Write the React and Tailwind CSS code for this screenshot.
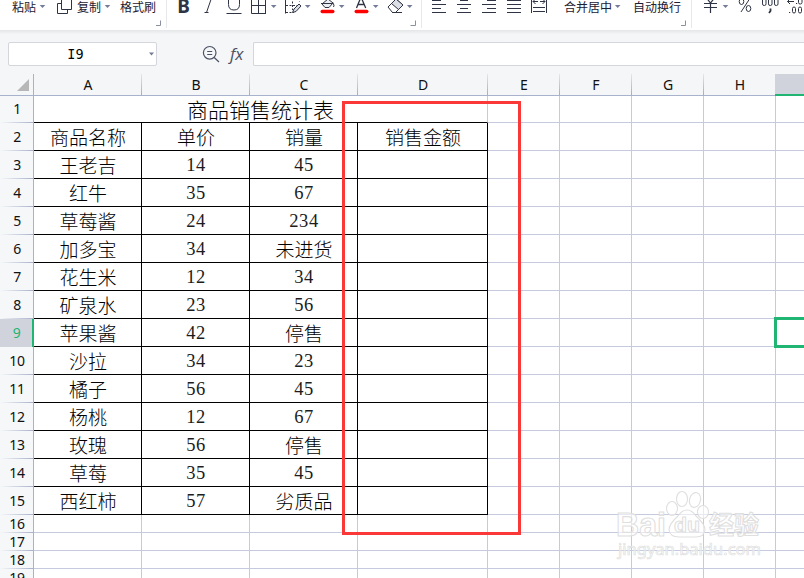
const CJK = `font-["Noto_Sans_CJK_SC",sans-serif]`;

const rows = [
  ["商品名称", "单价", "销量", "销售金额"],
  ["王老吉", "14", "45", ""],
  ["红牛", "35", "67", ""],
  ["草莓酱", "24", "234", ""],
  ["加多宝", "34", "未进货", ""],
  ["花生米", "12", "34", ""],
  ["矿泉水", "23", "56", ""],
  ["苹果酱", "42", "停售", ""],
  ["沙拉", "34", "23", ""],
  ["橘子", "56", "45", ""],
  ["杨桃", "12", "67", ""],
  ["玫瑰", "56", "停售", ""],
  ["草莓", "35", "45", ""],
  ["西红柿", "57", "劣质品", ""],
];

const dataWidths = ["w-[108px]", "w-[108px]", "w-[108px]", "w-[130px]"];
const columns = [
  ["A", "w-[108px]"],
  ["B", "w-[108px]"],
  ["C", "w-[108px]"],
  ["D", "w-[130px]"],
  ["E", "w-[72px]"],
  ["F", "w-[72px]"],
  ["G", "w-[72px]"],
  ["H", "w-[72px]"],
];

/* Drawing slot of the ribbon: x is its left edge in ribbon coordinates. */
function Draw({ x, w, children }) {
  return (
    <svg
      width={w}
      height="30"
      viewBox={`${x} 0 ${w} 30`}
      className="block shrink-0"
      fill="none"
      stroke="#2f3444"
      strokeWidth="1"
    >
      {children}
    </svg>
  );
}

function Caret({ x }) {
  return <path d={`M${x - 2.8} 5h5.6l-2.8 3z`} fill="#737b96" stroke="none" />;
}

function Corner({ x }) {
  return <path d={`M${x} 25.5h5v-5`} stroke="#8b90a0" />;
}

function Separator({ x }) {
  return <path d={`M${x + 0.5} 0v28`} stroke="#e6e8ec" />;
}

function Label({ width, children }) {
  return (
    <span className={`${width} ${CJK} h-[14px] shrink-0 whitespace-nowrap text-[12px] leading-[14px] text-[#1c2030]`}>
      {children}
    </span>
  );
}

function Ribbon() {
  return (
    <div className="flex h-[30px] w-full items-start overflow-hidden bg-white pl-[12px]">
      <Label width="w-[25px]">粘贴</Label>
      <Draw x={37} w={40}>
        <Caret x={42.5} />
        <path d="M61.5 -2H71.5V9.5H61.5z M61.5 3.5H57.5V13.5H67.5V9.5" />
      </Draw>
      <Label width="w-[25px]">复制</Label>
      <Draw x={102} w={18}>
        <Caret x={107.5} />
      </Draw>
      <Label width="w-[36px]">格式刷</Label>
      <Draw x={156} w={264}>
        <Corner x={155.5} />
        <Separator x={166} />
        <text x="177.3" y="12.5" fill="#2f3444" stroke="none" fontFamily="Noto Sans" fontWeight="700" fontSize="19">B</text>
        <path d="M206.500 12.500L211.500 -2M204.500 12.500h4" />
        <path d="M228.500 -2V4.500Q228.500 10 234 10T239.500 4.500V-2M226.500 13.500H241.500" />
        <path d="M251.500 -2V13.500H266M265.500 -2V13.500M258.500 -2V13.500M251.500 5.500H265.500" />
        <Caret x={273.7} />
        <path d="M285.500 -2V13.500" />
        <path d="M286 5.500H298M286 12.500H294M292.500 -2V10M299.500 -2V2" strokeDasharray="2 1.500" />
        <path d="M292.500 12.500L294 9L299 4L301 6L296 11.500z" fill="#d9dce2" />
        <Caret x={307.7} />
        <path d="M322 4L328 -1L333 3L329 7.500H325z M321 3.500H332" fill="#eceef2" />
        <path d="M332.500 2Q335 6 333.500 7" />
        <rect x="320.500" y="9.700" width="14" height="3.500" rx="1.700" fill="#ff0000" stroke="none" />
        <Caret x={341.700} />
        <path d="M356.500 8L361 -3L365.700 8M358 4.500H364" strokeWidth="1.300" />
        <rect x="354.500" y="9.700" width="14" height="3.500" rx="1.700" fill="#ff0000" stroke="none" />
        <Caret x={375.700} />
        <path d="M388 7L396 -1L403 5L395.500 12.500H392.500z" fill="#fff" />
        <path d="M391.500 3.500L396 -1L403 5L398.500 9.500z" fill="#dcdfe5" />
        <path d="M392 12.500H402" />
        <Caret x={409.700} />
        <Corner x={410.500} />
      </Draw>
      <Draw x={420} w={144}>
        <Separator x={421} />
        <path d="M432 .500H441M432 4.500H446M432 8.500H441M432 12.500H446" />
        <path d="M460 .500H468M457 4.500H471M460 8.500H468M457 12.500H471" />
        <path d="M487 .500H496M482 4.500H496M487 8.500H496M482 12.500H496" />
        <path d="M507 .500H521M507 4.500H521M507 8.500H521M507 12.500H521" />
        <path d="M531.500 0V13M546.500 0V13M533 7.500H545M533 11.500H545M533 1.500H538M540 1.500H545M535.500 -1L533 1.500L535.500 4M542.500 -1L545 1.500L542.500 4" />
      </Draw>
      <Label width="w-[49px]">合并居中</Label>
      <Draw x={613} w={20}>
        <Caret x={617.700} />
      </Draw>
      <Label width="w-[48px]">自动换行</Label>
      <Draw x={681} w={123}>
        <Corner x={680.500} />
        <Separator x={691} />
        <path d="M705 -4L710.500 3L716 -4M704 3.500H717M704 7.500H717M710.500 3V13" strokeWidth="1.200" />
        <Caret x={725.500} />
        <path d="M749.500 -1L741 12" />
        <ellipse cx="741.500" cy="1.500" rx="2.300" ry="3" />
        <ellipse cx="748.500" cy="8.500" rx="2.300" ry="3" />
        <rect x="762.500" y="-2" width="3.500" height="7.500" rx="1.600" />
        <rect x="768.500" y="-2" width="3.500" height="7.500" rx="1.600" />
        <rect x="774.500" y="-2" width="3.500" height="7.500" rx="1.600" />
        <path d="M770.500 8.500V11L769 13" strokeWidth="1.800" />
        <path d="M787.500 1.500H794M790 -1L787.500 1.500L790 4M796 3.500H797.200M789 12.500H790.200" />
        <rect x="798.500" y="-3" width="3.500" height="7" rx="1.600" />
        <rect x="792.500" y="7" width="3" height="6" rx="1.500" />
        <rect x="798.500" y="7" width="3" height="6" rx="1.500" />
      </Draw>
    </div>
  );
}

function FormulaBar() {
  return (
    <div className="flex h-[44px] items-start bg-gradient-to-b from-[#e5e6e8] from-0% to-[#f5f6f8] to-10% pt-[12px] pl-[8px]">
      <div className="flex h-[24px] w-[149px] items-center rounded-[2px] border border-[#d4d6db] bg-white">
        <span className="w-[135px] pt-px pr-[2px] text-center font-['DejaVu_Sans_Mono',monospace] text-[13.5px] leading-none text-black">I9</span>
        <svg width="7" height="4" viewBox="0 0 7 4" className="ml-[4px]"><path d="M1 .500h5L3.500 3.500z" fill="#737b96" /></svg>
      </div>
      <svg width="96" height="24" viewBox="157 42 96 24" fill="none" stroke="#4b5264" strokeWidth="1.200">
        <circle cx="209.700" cy="52.800" r="6.300" />
        <path d="M214.200 57.500L219 62M207.200 51.500H212.200M207.200 54.500H212.200" />
        <text x="230" y="59.500" fill="#4b5264" stroke="none" fontFamily="Open Sans" fontStyle="italic" fontSize="17">fx</text>
      </svg>
      <div className="h-[24px] flex-1 rounded-l-[2px] border border-r-0 border-[#d4d6db] bg-white" />
    </div>
  );
}

function Header() {
  return (
    <div className="flex h-[22px] w-full bg-[#f5f6f8]">
      <div className="flex w-[34px] shrink-0 items-end justify-end border-r border-b border-r-[#a9b2cc] border-b-[#a9b2cc] pr-[4px] pb-[4px]">
        <svg width="12" height="12"><path d="M12 0V12H0z" fill="#b7b7b7" /></svg>
      </div>
      {columns.map(([name, width]) => (
        <div key={name} className={`${width} flex shrink-0 border-b border-[#a9b2cc]`}>
          <span className="flex-1 pl-px text-center font-['Noto_Sans',sans-serif] text-[14px] leading-[21px] text-[#111]">{name}</span>
          <i className="w-px bg-gradient-to-b from-[#e3e6ee] to-[#a3adc8]" />
        </div>
      ))}
      <div className="-ml-px flex-1 border-b-2 border-[#21b573] bg-[#d0d3dc]" />
    </div>
  );
}

function RowNumber({ n }) {
  const active = n === 9;
  return (
    <div
      className={`flex w-[34px] shrink-0 flex-col font-["Noto_Sans",sans-serif] text-[14px] tracking-[-0.3px] ${
        active ? "border-r-2 border-[#21b573] bg-[#d0d3dc] text-[#21b573]" : "border-r border-[#a9b2cc] bg-[#f5f7f9] text-[#111]"
      }`}
    >
      <span className="flex flex-1 items-center justify-center pl-px leading-none">{n}</span>
      <i className={`h-px ${active ? "bg-[#d0d3dc]" : "bg-gradient-to-r from-[#f5f7f9] to-[#a9b2cc]"}`} />
    </div>
  );
}

function BlankCells() {
  return (
    <>
      {[0, 1, 2, 3].map((i) => (
        <div key={i} className="w-[72px] shrink-0 border-r border-b border-[#c5cade]" />
      ))}
      <div className="flex-1 border-b border-[#c5cade]" />
    </>
  );
}

function Cell({ value, width }) {
  const numeric = /^\d/.test(value);
  return (
    <div className={`${width} flex shrink-0 items-center justify-center border-r border-b border-black`}>
      {numeric ? (
        <span className="pt-px pl-px font-['Liberation_Serif',serif] text-[18.5px] leading-none tracking-[0.6px] text-[#1c1c1c]">{value}</span>
      ) : (
        <span className={`${CJK} whitespace-nowrap pb-px pl-px text-[19px] leading-[25px] font-light`}>{value}</span>
      )}
    </div>
  );
}

function Watermark() {
  return (
    <svg width="160" height="80" viewBox="610 485 160 80" className="absolute top-[485px] left-[610px]">
      <g fill="#fff" fillOpacity="0.6" stroke="#dfdfdf" strokeWidth="1.100">
        <ellipse cx="672" cy="508.500" rx="5.500" ry="7" />
        <ellipse cx="682" cy="499" rx="5.500" ry="7.500" />
        <ellipse cx="695" cy="500" rx="5.500" ry="7.500" transform="rotate(15 695 500)" />
        <ellipse cx="703" cy="512" rx="5.500" ry="6.500" />
        <path d="M687 510Q692 510 696 516Q705 524 705 530Q704 537 696 537H679Q670 537 669 530Q669 524 678 516Q682 510 687 510z" />
        <g fontWeight="700">
          <text x="616" y="535.500" fontFamily="Liberation Sans" fontSize="33" textLength="50" lengthAdjust="spacingAndGlyphs">Bai</text>
          <text x="674" y="532" fontFamily="Liberation Sans" fontSize="21" textLength="26" lengthAdjust="spacingAndGlyphs">du</text>
          <text x="709" y="534" fontFamily="Noto Sans CJK SC" fontSize="25" textLength="50">经验</text>
          <text x="618" y="555" fontFamily="Noto Sans" fontWeight="400" strokeWidth="0.700" fontSize="15.500" textLength="143" lengthAdjust="spacingAndGlyphs">jingyan.baidu.com</text>
        </g>
      </g>
    </svg>
  );
}

export default function App() {
  return (
    <div className="relative flex h-[578px] w-[804px] flex-col overflow-hidden bg-white text-black">
      <Ribbon />
      <FormulaBar />
      <Header />
      <div className="flex h-[482px] flex-col overflow-hidden">
        <div className="flex h-[27px] shrink-0">
          <RowNumber n={1} />
          <div className="flex w-[454px] shrink-0 items-center justify-center border-r border-b border-r-[#c5cade] border-b-black">
            <span className={`${CJK} pt-px text-[21px] leading-[25px] font-light`}>商品销售统计表</span>
          </div>
          <BlankCells />
        </div>
        {rows.map((row, i) => (
          <div key={i} className="flex h-[28px] shrink-0">
            <RowNumber n={i + 2} />
            {row.map((value, c) => (
              <Cell key={c} value={value} width={dataWidths[c]} />
            ))}
            <BlankCells />
          </div>
        ))}
        {[16, 17, 18, 19].map((n) => (
          <div key={n} className="flex h-[18px] shrink-0">
            <RowNumber n={n} />
            {dataWidths.map((width, c) => (
              <div key={c} className={`${width} shrink-0 border-r border-b border-[#c5cade]`} />
            ))}
            <BlankCells />
          </div>
        ))}
      </div>
      <div className="absolute top-[101px] left-[342px] h-[434px] w-[179px] border-3 border-[#fb3838]" />
      <div className="absolute top-[317px] left-[774px] h-[31px] w-[40px] border-3 border-[#21b573]" />
      <Watermark />
    </div>
  );
}
